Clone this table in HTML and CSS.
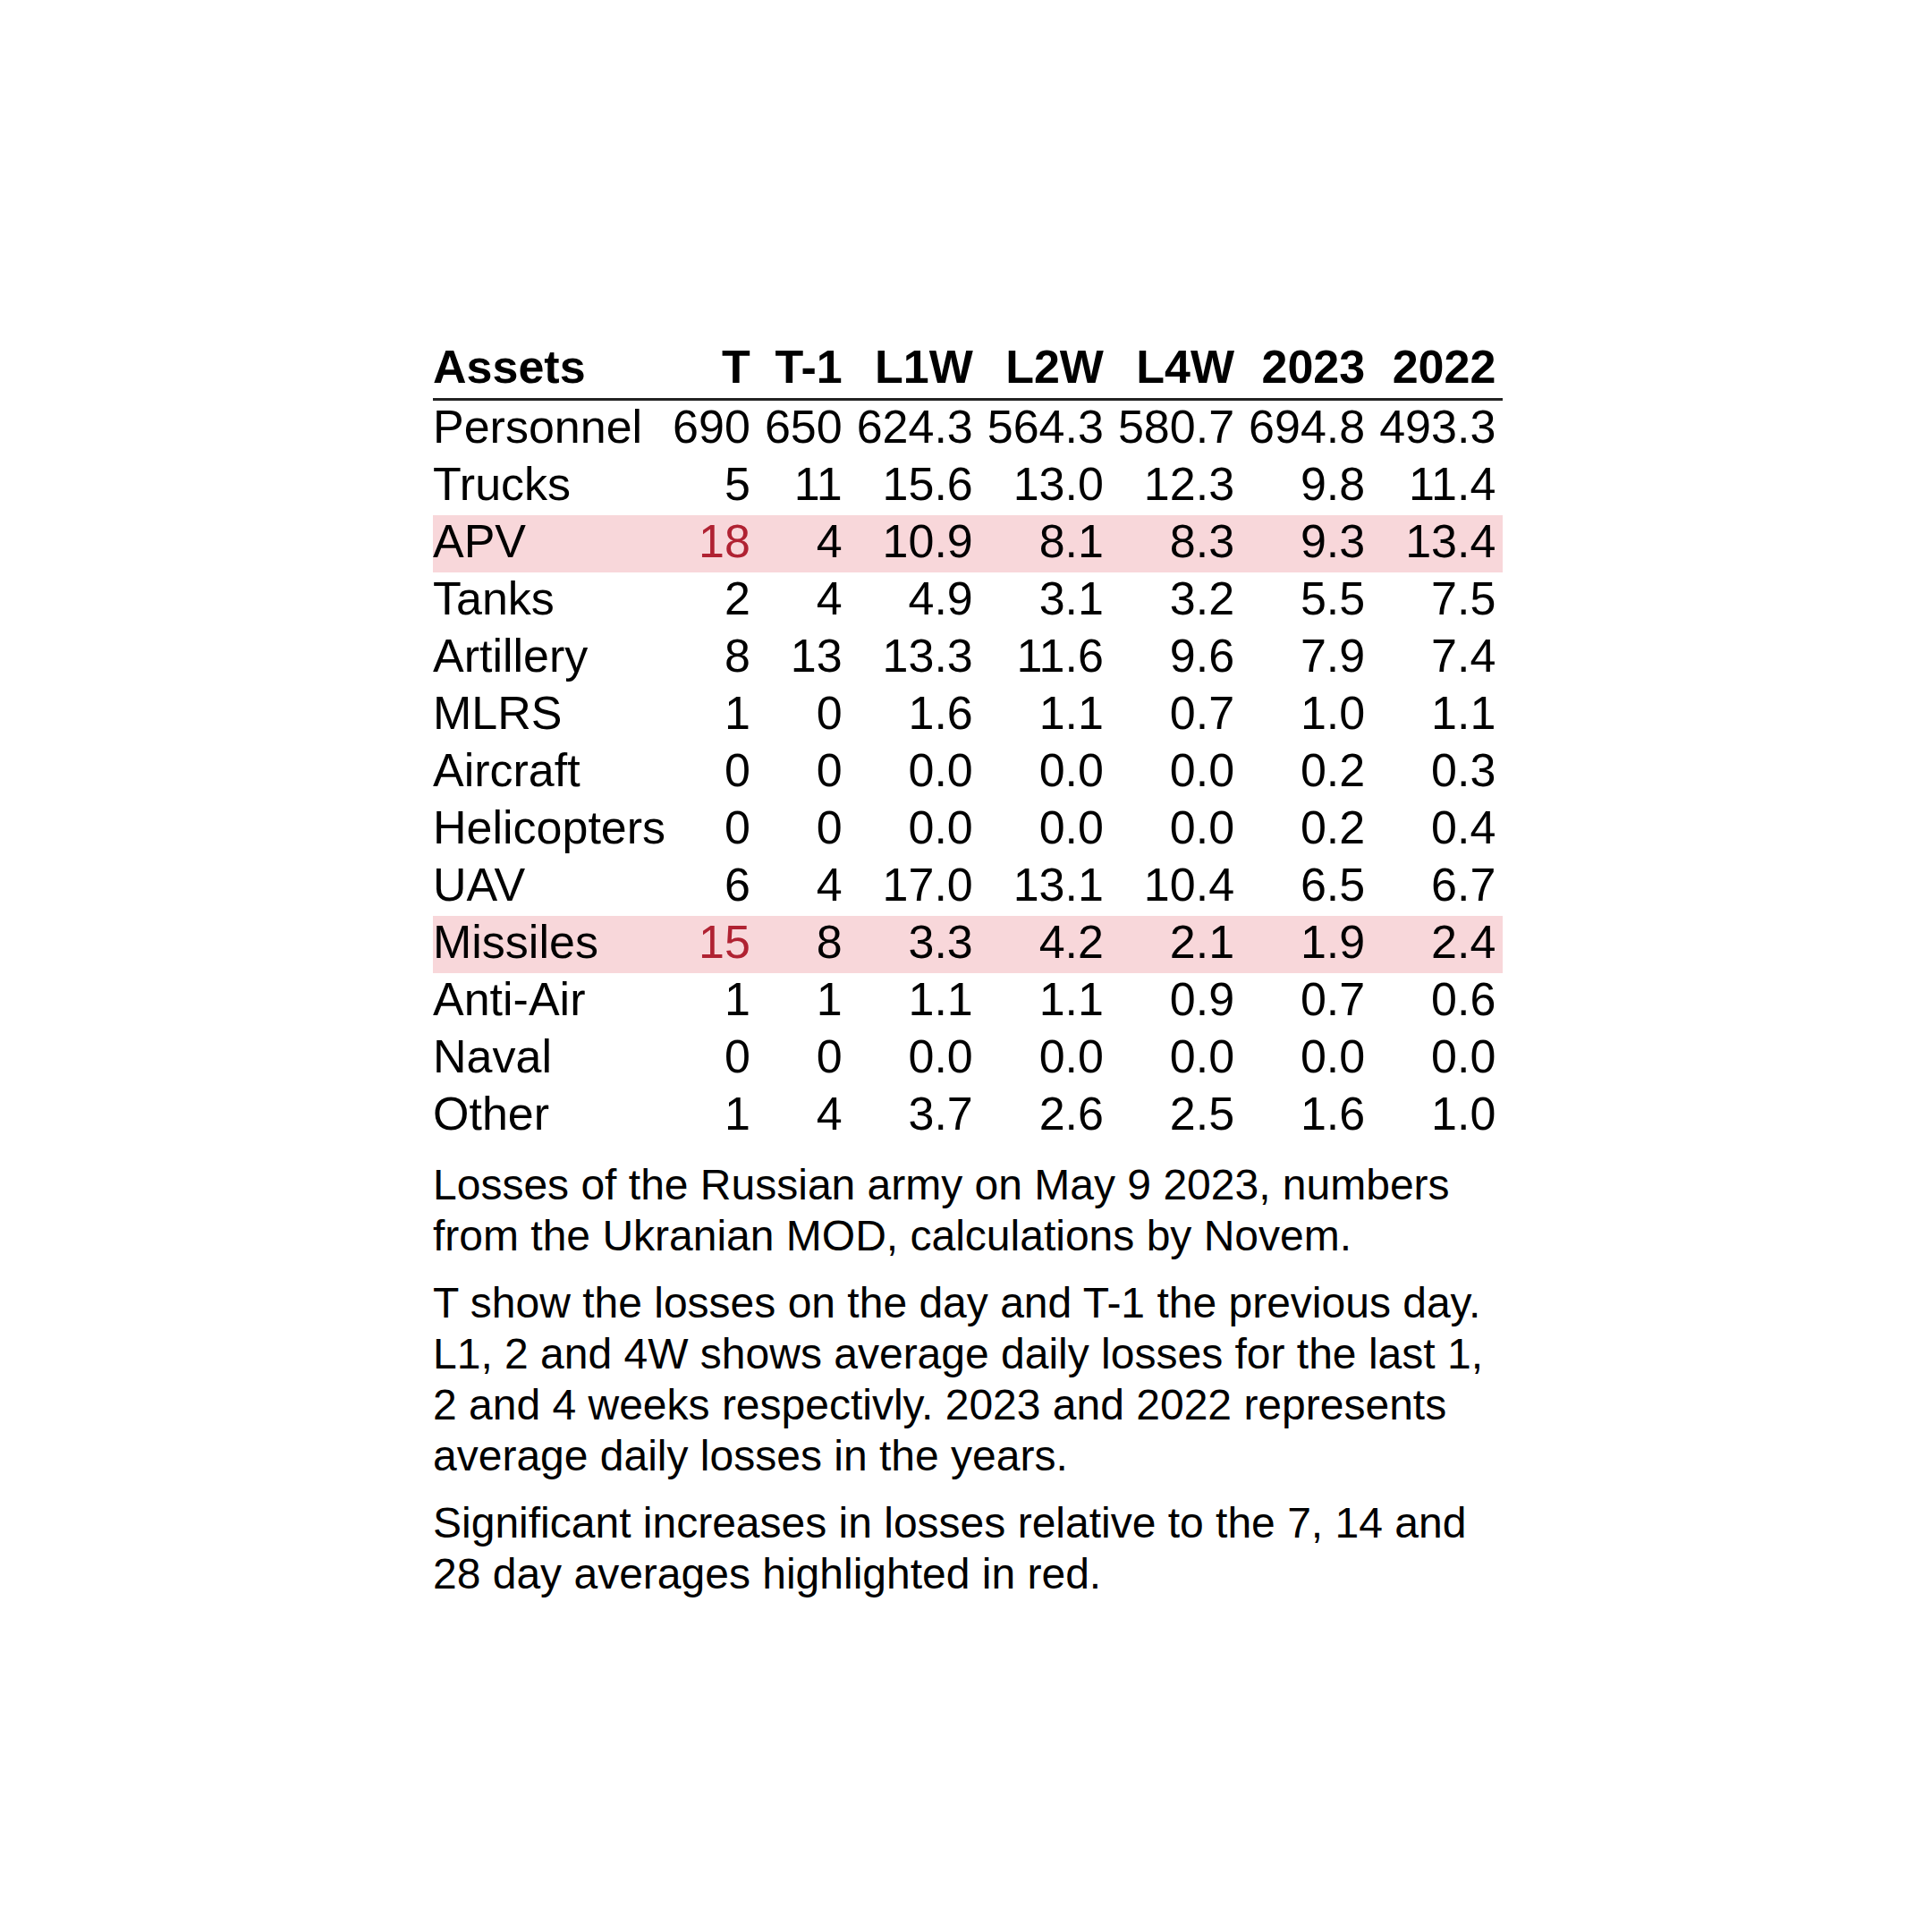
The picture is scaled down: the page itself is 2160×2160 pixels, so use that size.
FILE: index.html
```html
<!DOCTYPE html>
<html lang="en">
<head>
<meta charset="utf-8">
<title>Losses of the Russian army</title>
<link rel="stylesheet" href="styles.css">
</head>
<body>
<div class="page">
  <div class="figure">
    <table class="losses">
      <thead>
        <tr><th class="name">Assets</th><th>T</th><th>T-1</th><th>L1W</th><th>L2W</th><th>L4W</th><th>2023</th><th>2022</th></tr>
      </thead>
      <tbody>
        <tr><td class="name">Personnel</td><td>690</td><td>650</td><td>624.3</td><td>564.3</td><td>580.7</td><td>694.8</td><td>493.3</td></tr>
        <tr><td class="name">Trucks</td><td>5</td><td>11</td><td>15.6</td><td>13.0</td><td>12.3</td><td>9.8</td><td>11.4</td></tr>
        <tr class="hl"><td class="name">APV</td><td class="red">18</td><td>4</td><td>10.9</td><td>8.1</td><td>8.3</td><td>9.3</td><td>13.4</td></tr>
        <tr><td class="name">Tanks</td><td>2</td><td>4</td><td>4.9</td><td>3.1</td><td>3.2</td><td>5.5</td><td>7.5</td></tr>
        <tr><td class="name">Artillery</td><td>8</td><td>13</td><td>13.3</td><td>11.6</td><td>9.6</td><td>7.9</td><td>7.4</td></tr>
        <tr><td class="name">MLRS</td><td>1</td><td>0</td><td>1.6</td><td>1.1</td><td>0.7</td><td>1.0</td><td>1.1</td></tr>
        <tr><td class="name">Aircraft</td><td>0</td><td>0</td><td>0.0</td><td>0.0</td><td>0.0</td><td>0.2</td><td>0.3</td></tr>
        <tr><td class="name">Helicopters</td><td>0</td><td>0</td><td>0.0</td><td>0.0</td><td>0.0</td><td>0.2</td><td>0.4</td></tr>
        <tr><td class="name">UAV</td><td>6</td><td>4</td><td>17.0</td><td>13.1</td><td>10.4</td><td>6.5</td><td>6.7</td></tr>
        <tr class="hl"><td class="name">Missiles</td><td class="red">15</td><td>8</td><td>3.3</td><td>4.2</td><td>2.1</td><td>1.9</td><td>2.4</td></tr>
        <tr><td class="name">Anti-Air</td><td>1</td><td>1</td><td>1.1</td><td>1.1</td><td>0.9</td><td>0.7</td><td>0.6</td></tr>
        <tr><td class="name">Naval</td><td>0</td><td>0</td><td>0.0</td><td>0.0</td><td>0.0</td><td>0.0</td><td>0.0</td></tr>
        <tr><td class="name">Other</td><td>1</td><td>4</td><td>3.7</td><td>2.6</td><td>2.5</td><td>1.6</td><td>1.0</td></tr>
      </tbody>
    </table>
    <div class="notes">
      <p>Losses of the Russian army on May 9 2023, numbers from the Ukranian MOD, calculations by Novem.</p>
      <p>T show the losses on the day and T-1 the previous day. L1, 2 and 4W shows average daily losses for the last 1, 2 and 4 weeks respectivly. 2023 and 2022 represents average daily losses in the years.</p>
      <p>Significant increases in losses relative to the 7, 14 and 28 day averages highlighted in red.</p>
    </div>
  </div>
</div>
</body>
</html>
```
FILE: styles.css
```css
html, body {
  margin: 0;
  padding: 0;
  background: #ffffff;
}

body {
  font-family: "Liberation Sans", Arial, sans-serif;
  color: #000000;
}

.page {
  padding: 381px 0 0 484px;
}

.figure {
  width: 1196px;
}

.losses {
  border-collapse: collapse;
  width: 1196px;
  font-size: 52px;
  line-height: 58px;
}

.losses th,
.losses td {
  padding: 0 8px 6px 8px;
  text-align: right;
  white-space: nowrap;
  height: 58px;
  box-sizing: content-box;
  vertical-align: top;
}

.losses th {
  font-weight: bold;
}

.losses thead tr {
  border-bottom: 3px solid #222222;
}

.losses .name {
  text-align: left;
  padding-left: 0;
  padding-right: 0;
}

.losses tr.hl td {
  background: #f8d7da;
}

.losses td.red {
  color: #b02232;
}

.notes {
  margin-top: 16px;
  font-size: 48px;
  line-height: 57px;
}

.notes p {
  margin: 0 0 18px 0;
}
```
